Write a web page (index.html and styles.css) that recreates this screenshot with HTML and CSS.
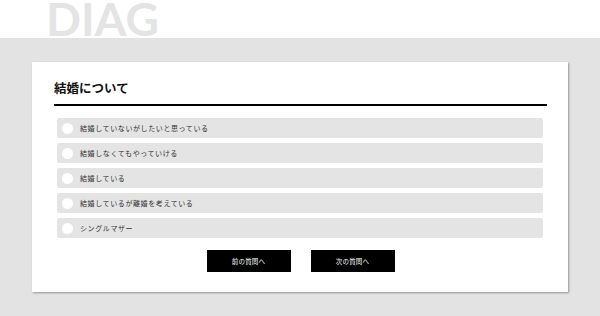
FILE: index.html
```html
<!DOCTYPE html>
<html lang="ja">
<head>
<meta charset="utf-8">
<title>DIAG</title>
<link rel="stylesheet" href="styles.css">
</head>
<body>
<header class="site-header">
  <div class="logo">DIAG</div>
</header>
<main class="main">
  <section class="card">
    <h2 class="card-title">結婚について</h2>
    <ul class="options">
      <li class="option"><span class="radio"></span><span class="label">結婚していないがしたいと思っている</span></li>
      <li class="option"><span class="radio"></span><span class="label">結婚しなくてもやっていける</span></li>
      <li class="option"><span class="radio"></span><span class="label">結婚している</span></li>
      <li class="option"><span class="radio"></span><span class="label">結婚しているが離婚を考えている</span></li>
      <li class="option"><span class="radio"></span><span class="label">シングルマザー</span></li>
    </ul>
    <div class="actions">
      <button class="btn">前の質問へ</button>
      <button class="btn">次の質問へ</button>
    </div>
  </section>
</main>
</body>
</html>
```
FILE: styles.css
```css
* { box-sizing: border-box; }
html, body { margin: 0; padding: 0; }
body {
  background: #e3e3e3;
  font-family: "Noto Sans CJK JP", "Noto Sans", sans-serif;
  width: 600px;
  height: 316px;
  overflow: hidden;
}
.site-header {
  height: 38px;
  background: #ffffff;
  overflow: hidden;
  padding-left: 46px;
}
.logo {
  font-family: Lato, "Open Sans", sans-serif;
  font-weight: 700;
  font-size: 46px;
  line-height: 38px;
  margin-top: 0;
  color: #e4e4e4;
}
.main {
  padding: 24px 32px 0 32px;
}
.card {
  background: #ffffff;
  box-shadow: 1px 1px 2px rgba(0, 0, 0, 0.35);
  padding: 18px 21px 20px 22px;
}
.card-title {
  margin: 0;
  font-size: 12.5px;
  line-height: 16px;
  font-weight: 700;
  color: #111;
  padding-bottom: 8px;
  border-bottom: 2px solid #000;
}
.options {
  list-style: none;
  margin: 12px 4px 0 3px;
  padding: 0;
  display: flex;
  flex-direction: column;
  gap: 5px;
}
.option {
  height: 20px;
  background: #e4e4e4;
  border-radius: 2px;
  display: flex;
  align-items: center;
  gap: 7px;
  padding-left: 5px;
}
.radio {
  width: 11px;
  height: 11px;
  border-radius: 50%;
  background: #fff;
  flex: none;
}
.label {
  font-size: 7px;
  letter-spacing: 0.6px;
  color: #333;
  line-height: 1;
}
.actions {
  display: flex;
  justify-content: center;
  gap: 20px;
  margin-top: 12px;
}
.btn {
  width: 84px;
  height: 22px;
  background: #000;
  color: #fff;
  border: none;
  padding: 0;
  font-family: "Noto Sans CJK JP", sans-serif;
  font-size: 6.5px;
  letter-spacing: 0.2px;
}
```
